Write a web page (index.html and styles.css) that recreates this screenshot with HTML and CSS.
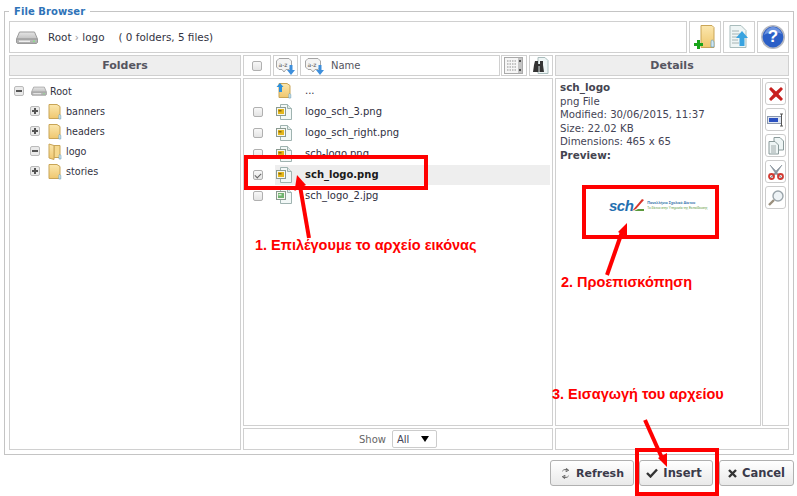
FILE: index.html
```html
<!DOCTYPE html>
<html lang="en">
<head>
<meta charset="utf-8">
<title>File Browser</title>
<link rel="stylesheet" href="styles.css">
</head>
<body>
<svg class="defs" width="0" height="0">
  <defs>
    <linearGradient id="fold" x1="0" y1="0" x2="0" y2="1"><stop offset="0" stop-color="#fbe7ae"/><stop offset="1" stop-color="#efc76e"/></linearGradient>
    <linearGradient id="drv" x1="0" y1="0" x2="0" y2="1"><stop offset="0" stop-color="#e6e6e6"/><stop offset="1" stop-color="#a9a9a9"/></linearGradient>
    <symbol id="i-folder" viewBox="0 0 14 17">
      <path d="M1 1.5h8l3 2v12H1z" fill="url(#fold)" stroke="#c9a557"/>
      <path d="M11.5 11.5c1 0 1.3 1 1.3 2v2.5h-2v-2.500c0-1 .2-2 .7-2z" fill="#cfe6f2" stroke="#6d9fb8" stroke-width=".6"/>
    </symbol>
    <symbol id="i-open" viewBox="0 0 14 17">
      <path d="M6 2.500h6v12H6z" fill="#f5d98f" stroke="#c9a557"/>
      <path d="M1 1l5 1.500v14L1 15z" fill="url(#fold)" stroke="#c9a557"/>
      <path d="M11.800 11.500c.8 0 1.200 1 1.200 2v2.500h-2v-2.500c0-1 .3-2 .8-2z" fill="#cfe6f2" stroke="#6d9fb8" stroke-width=".6"/>
    </symbol>
    <symbol id="i-drive" viewBox="0 0 22 14">
      <path d="M3.500 1.500h15l3 7v3.500l-1 1H1.500l-1-1V8.500z" fill="url(#drv)" stroke="#9b9b9b"/>
      <path d="M1 8.500h20" stroke="#8e8e8e"/>
      <path d="M3 10.800h11" stroke="#efefef" stroke-width="1.400"/>
      <circle cx="18" cy="10.800" r="1" fill="#8be08b"/>
    </symbol>
    <symbol id="i-file" viewBox="0 0 16 16">
      <path d="M4.500 .5h7l4 4v11h-11z" fill="#f2f8f7" stroke="#9fb3b0"/>
      <path d="M11.500 .5v4h4" fill="#dfe9e8" stroke="#9fb3b0"/>
      <rect x=".5" y="3.500" width="9" height="8" fill="#f7f7f0" stroke="#8a9a90"/>
      <rect x="2" y="5" width="6" height="5" fill="#e3b71c"/>
      <rect x="2.500" y="6" width="3" height="1.500" fill="#8a6a10"/>
    </symbol>
    <symbol id="i-jpg" viewBox="0 0 16 16">
      <path d="M4.500 .5h7l4 4v11h-11z" fill="#f2f8f7" stroke="#9fb3b0"/>
      <path d="M11.500 .5v4h4" fill="#dfe9e8" stroke="#9fb3b0"/>
      <rect x=".5" y="3.500" width="9" height="8" fill="#f7f7f0" stroke="#8a9a90"/>
      <rect x="2" y="5" width="6" height="5" fill="#6fb36f"/>
      <rect x="2.500" y="6" width="3" height="1.500" fill="#d8ecd8"/>
    </symbol>
    <symbol id="i-sort" viewBox="0 0 20 18">
      <path d="M3 1.500h10l2.500 2.500v6L13 12.500H10L8 15l-2-2.500H3L.5 10V4z" fill="#f4f4f4" stroke="#a5a5a5"/>
      <text x="2.500" y="9.500" class="sort-label">a-z</text>
      <path d="M13.500 8h3v5h2.500l-4 5-4-5h2.500z" fill="#3e8fdc"/>
    </symbol>
  </defs>
</svg>

<fieldset class="browser">
  <legend class="legend">File Browser</legend>

  <div class="toolbar">
    <div class="cell path">
      <svg class="ic-drive-lg"><use href="#i-drive"/></svg>
      <span class="crumbs">Root <span class="sep">›</span> logo</span>
      <span class="count">( 0 folders, 5 files)</span>
    </div>
    <div class="cell tool">
      <svg width="22" height="24" viewBox="0 0 22 24">
        <path d="M8 .5h11l2 2v20H8z" fill="url(#fold)" stroke="#c9a557" transform="translate(-1 0)"/>
        <path d="M18 15c1 0 2 1 2 3v4h-3v-4c0-2 .4-3 1-3z" fill="#cfe6f2" stroke="#6d9fb8" stroke-width=".7"/>
        <path d="M3 15h3v3h3v3H6v3H3v-3H0v-3h3z" fill="#1aa51a"/>
      </svg>
    </div>
    <div class="cell tool">
      <svg width="20" height="24" viewBox="0 0 20 24">
        <path d="M1 .5h11l5 5v17H1z" fill="#eef5f5" stroke="#a9bcbc"/>
        <path d="M3 6h7M3 9h8M3 12h6M3 15h6M3 18h7" stroke="#a6b4b4"/>
        <path d="M13 6l6 7h-3.500v8h-5v-8H7z" fill="#39a3e0"/>
      </svg>
    </div>
    <div class="cell tool">
      <svg width="24" height="24" viewBox="0 0 24 24">
        <circle cx="12" cy="12" r="11.200" fill="#2b5fc7" stroke="#b5b8c0" stroke-width="1.600"/>
        <path d="M3 10c2-6 6-8 9-8s7 2 9 7c-5-2-13-2-18 1z" fill="#6d94e0"/>
      </svg>
      <span class="help-mark">?</span>
    </div>
  </div>

  <div class="panes">
    <div class="pane-folders">
      <div class="head">Folders</div>
      <div class="box tree">
        <div class="tree-row root"><i class="exp minus"></i><svg class="ic-drive"><use href="#i-drive"/></svg><span>Root</span></div>
        <div class="tree-row"><i class="exp plus"></i><svg class="ic-folder"><use href="#i-folder"/></svg><span>banners</span></div>
        <div class="tree-row"><i class="exp plus"></i><svg class="ic-folder"><use href="#i-folder"/></svg><span>headers</span></div>
        <div class="tree-row"><i class="exp minus"></i><svg class="ic-folder"><use href="#i-open"/></svg><span>logo</span></div>
        <div class="tree-row"><i class="exp plus"></i><svg class="ic-folder"><use href="#i-folder"/></svg><span>stories</span></div>
      </div>
    </div>

    <div class="pane-files">
      <div class="files-head">
        <div class="fh fh-check"><i class="chk"></i></div>
        <div class="fh fh-sort"><svg class="ic-sort"><use href="#i-sort"/></svg></div>
        <div class="fh fh-name"><svg class="ic-sort"><use href="#i-sort"/></svg><span>Name</span></div>
        <div class="fh fh-view">
          <svg width="20" height="18" viewBox="0 0 20 18">
            <rect x=".5" y=".5" width="18" height="16" fill="#f6f6f6" stroke="#aaa"/>
            <path d="M3 4h9M3 7h9M3 10h9M3 13h9" stroke="#8f8f8f" stroke-dasharray="1.500 1"/>
            <rect x="14" y="1" width="4" height="15" fill="#c4c4c4"/>
            <rect x="15" y="3" width="2" height="2" fill="#555"/><rect x="15" y="12" width="2" height="2" fill="#555"/>
          </svg>
        </div>
        <div class="fh fh-find">
          <svg width="16" height="18" viewBox="0 0 16 18">
            <path d="M5 .5h7l3 3v13H5z" fill="#eef5f5" stroke="#a9bcbc"/>
            <path d="M2 4h3v3h2V4h3v4l1 7H6.500V9h-1v6H0l1-7z" fill="#333"/>
          </svg>
        </div>
      </div>
      <div class="box filelist">
        <div class="file up">
          <i class="chk blank"></i>
          <svg class="ic-up" width="16" height="17" viewBox="0 0 16 17">
            <use href="#i-folder" width="14" height="17" x="2"/>
            <path d="M4 1l3.500 4H6v5H3V5H.5z" fill="#2a8fdc"/>
          </svg>
          <span>...</span>
        </div>
        <div class="file"><i class="chk"></i><svg class="ic-file"><use href="#i-file"/></svg><span>logo_sch_3.png</span></div>
        <div class="file"><i class="chk"></i><svg class="ic-file"><use href="#i-file"/></svg><span>logo_sch_right.png</span></div>
        <div class="file"><i class="chk"></i><svg class="ic-file"><use href="#i-file"/></svg><span>sch-logo.png</span></div>
        <div class="file selected"><i class="chk on"></i><div class="sel-band"><svg class="ic-file"><use href="#i-file"/></svg><span>sch_logo.png</span></div></div>
        <div class="file"><i class="chk"></i><svg class="ic-file"><use href="#i-jpg"/></svg><span>sch_logo_2.jpg</span></div>
      </div>
      <div class="box show-bar">
        <span>Show</span>
        <span class="select">All<i class="caret"></i></span>
      </div>
    </div>

    <div class="pane-details">
      <div class="head">Details</div>
      <div class="details-body">
        <div class="box info">
          <div class="strong">sch_logo</div>
          <div>png File</div>
          <div>Modified: 30/06/2015, 11:37</div>
          <div>Size: 22.02 KB</div>
          <div>Dimensions: 465 x 65</div>
          <div class="strong">Preview:</div>
          <div class="preview">
            <span class="logo-sch">sch</span>
            <svg class="logo-mark" width="14" height="14" viewBox="0 0 14 14">
              <path d="M1 13 11 1l2 1L5 11z" fill="#d8352a"/>
              <path d="M3 13h10v-2H7z" fill="#5c9a3c"/>
            </svg>
            <span class="logo-copy">
              <span class="logo-l1">Πανελλήνιο Σχολικό Δίκτυο</span>
              <span class="logo-l2">Το δίκτυο στην Υπηρεσία της Εκπαίδευσης</span>
            </span>
          </div>
        </div>
        <div class="box actions">
          <div class="act">
            <svg width="16" height="16" viewBox="0 0 16 16"><path d="M1 3l2-2 5 4.500L13 1l2 2-4.500 5 4.500 5-2 2-5-4.500L3 15l-2-2 4.500-5z" fill="#c8201e"/></svg>
          </div>
          <div class="act">
            <svg width="18" height="14" viewBox="0 0 18 14"><rect x=".5" y="3.500" width="14" height="7" fill="#dfe6f2" stroke="#8a97ad"/><rect x="2" y="5" width="9" height="4" fill="#2a50c0"/><path d="M13 1h3M13 13h3M14.500 1v12" stroke="#555" fill="none"/></svg>
          </div>
          <div class="act">
            <svg width="16" height="18" viewBox="0 0 16 18"><path d="M6 .5h6l3.500 3.500v9H6z" fill="#eef5f5" stroke="#8a9a9a"/><path d="M1 4.500h6l3.500 3.500v9H1z" fill="#eef5f5" stroke="#8a9a9a"/><path d="M3 9h5M3 11h5M3 13h5M3 15h5" stroke="#a0aaaa"/></svg>
          </div>
          <div class="act">
            <svg width="16" height="16" viewBox="0 0 16 16"><path d="M2 1l6 6 6-6-5 7.500L15 15 8 10 1 15l6-6.500z" fill="#8d99a3" stroke="#77838c" stroke-width=".5"/><circle cx="3.500" cy="12.500" r="2.500" fill="none" stroke="#d23a32" stroke-width="1.800"/><circle cx="12.500" cy="12.500" r="2.500" fill="none" stroke="#d23a32" stroke-width="1.800"/></svg>
          </div>
          <div class="act">
            <svg width="16" height="16" viewBox="0 0 16 16"><circle cx="10" cy="6" r="5" fill="#eef3f6" stroke="#9aa4aa" stroke-width="1.400"/><path d="M6 10l-5 5" stroke="#9a8f7d" stroke-width="2.400"/></svg>
          </div>
        </div>
      </div>
      <div class="box details-foot"></div>
    </div>
  </div>
</fieldset>

<div class="buttons">
  <button class="btn btn-refresh">
    <svg width="11" height="11" viewBox="0 0 12 12"><path d="M2.500 3.500A4.500 4.500 0 0 1 9 2.500M9.500 8.500A4.500 4.500 0 0 1 3 9.500M7 .5l-.5 3.500 3-1.500zM5 11.500l.5-3.500-3 1.500z" fill="none" stroke="#555" stroke-width=".9"/></svg>
    Refresh
  </button>
  <button class="btn btn-insert">
    <svg width="12" height="10" viewBox="0 0 12 10"><path d="M1 5l3.500 3.500L11 1.500" fill="none" stroke="#333" stroke-width="2.400"/></svg>
    Insert
  </button>
  <button class="btn btn-cancel">
    <svg width="9" height="9" viewBox="0 0 9 9"><path d="M1 1l7 7M8 1L1 8" stroke="#333" stroke-width="2.400"/></svg>
    Cancel
  </button>
</div>

<div class="mark mark-1"></div>
<div class="mark mark-2"></div>
<div class="mark mark-3"></div>
<svg class="arrows" width="797" height="496" viewBox="0 0 797 496">
  <path d="M309 238 300 186" stroke="#f00" stroke-width="4" fill="none"/>
  <path d="M297 175 294.500 191 306 185z" fill="#f00"/>
  <path d="M607 275 622 232" stroke="#f00" stroke-width="4" fill="none"/>
  <path d="M627 223 618 232 627 237z" fill="#f00"/>
  <path d="M645 420 662 458" stroke="#f00" stroke-width="4" fill="none"/>
  <path d="M667 467 658 458 667 453z" fill="#f00"/>
</svg>
<div class="note note-1">1. Επιλέγουμε το αρχείο εικόνας</div>
<div class="note note-2">2. Προεπισκόπηση</div>
<div class="note note-3">3. Εισαγωγή του αρχείου</div>
</body>
</html>
```

FILE: styles.css
```css
* { box-sizing: border-box; }
html, body { margin: 0; padding: 0; }
body {
  position: relative;
  width: 797px;
  height: 496px;
  overflow: hidden;
  background: #fff;
  font-family: "DejaVu Sans", Verdana, sans-serif;
  font-size: 10.4px;
  color: #33333f;
}
.defs { position: absolute; }
.browser {
  margin: 4px 0 0 4px;
  width: 790px;
  height: 451px;
  padding: 3px 4px 4px 4px;
  border: 1px solid #c4c4c4;
  display: flex;
  flex-direction: column;
  gap: 2px;
}
.legend {
  margin-left: 0;
  padding: 2px 5px 0;
  font-weight: bold;
  font-size: 10px;
  letter-spacing: .08px;
  line-height: 12px;
  color: #2f73b8;
}
.toolbar { display: flex; gap: 2px; height: 32px; flex: none; }
.cell {
  border: 1px solid #d0d0d0;
  display: flex;
  align-items: center;
  position: relative;
}
.path { flex: 1; padding-left: 6px; }
.tool { width: 32px; justify-content: center; }
.ic-drive-lg { width: 22px; height: 15px; margin-right: 10px; }
.crumbs { margin-right: 14px; }
.sep { color: #999; }
.help-mark {
  position: absolute;
  inset: 0;
  display: flex;
  align-items: center;
  justify-content: center;
  color: #fff;
  font: bold 17px "Liberation Sans", sans-serif;
}
.panes { display: flex; gap: 2px; flex: 1; min-height: 0; }
.pane-folders { width: 232px; display: flex; flex-direction: column; gap: 2px; }
.pane-files { width: 310px; display: flex; flex-direction: column; gap: 2px; }
.pane-details { width: 234px; display: flex; flex-direction: column; gap: 2px; }
.head {
  height: 21px;
  flex: none;
  background: #eee;
  border: 1px solid #d0d0d0;
  text-align: center;
  font-weight: bold;
  font-size: 11px;
  line-height: 19px;
  color: #555560;
}
.box { border: 1px solid #d0d0d0; }
.tree { flex: 1; padding: 2px 0 0 4px; font-size: 9.6px; }
.tree-row { height: 20px; display: flex; align-items: center; padding-left: 16px; }
.tree-row.root { padding-left: 0; }
.exp {
  width: 10px;
  height: 10px;
  margin-right: 7px;
  border: 1px solid #bbb;
  border-radius: 2px;
  background: #eaeaea;
  position: relative;
  flex: none;
}
.exp::before {
  content: "";
  position: absolute;
  left: 1px;
  top: 3px;
  width: 6px;
  height: 2px;
  background: #555;
}
.plus::after {
  content: "";
  position: absolute;
  left: 3px;
  top: 1px;
  width: 2px;
  height: 6px;
  background: #555;
}
.ic-drive { width: 16px; height: 10px; margin-right: 3px; }
.ic-folder { width: 14px; height: 17px; margin-right: 4px; margin-left: 1px; }

.files-head { display: flex; gap: 2px; height: 21px; flex: none; }
.fh { border: 1px solid #d0d0d0; display: flex; align-items: center; justify-content: center; }
.fh-check { width: 28px; }
.fh-sort { width: 25px; }
.fh-name { flex: 1; justify-content: flex-start; margin-right: -1px; }
.fh-name .ic-sort { margin-left: 4px; }
.fh-name span { margin-left: 6px; color: #555560; font-size: 10px; }
.fh-view { width: 26px; }
.fh-find { width: 24px; }
.ic-sort { width: 20px; height: 18px; }
.sort-label { font: 6px "DejaVu Sans", sans-serif; fill: #555; }
.chk {
  display: block;
  width: 10px;
  height: 10px;
  flex: none;
  border: 1px solid #b0b0b0;
  border-radius: 2px;
  background: linear-gradient(#f8f8f8, #e4e4e4);
  position: relative;
}
.chk.blank { visibility: hidden; }
.chk.on::after {
  content: "";
  position: absolute;
  left: 1px;
  top: 0;
  width: 5px;
  height: 3px;
  border-left: 1px solid #666;
  border-bottom: 1px solid #666;
  transform: rotate(-45deg);
  transform-origin: 50% 50%;
  margin-top: 2px;
}
.filelist { flex: 1; padding: 1px 0 0 9px; min-height: 0; font-size: 10px; }
.file { height: 21px; display: flex; align-items: center; }
.file .chk { margin-right: 13px; }
.ic-file { width: 16px; height: 16px; margin-right: 13px; flex: none; }
.ic-up { width: 16px; height: 17px; margin-right: 13px; flex: none; }
.file span { color: #2e2e3e; }
.sel-band {
  display: flex;
  align-items: center;
  width: 275px;
  height: 20px;
  background: #eee;
  padding-left: 1px;
}
.file.selected .chk { margin-right: 12px; }
.file.selected span { font-weight: bold; color: #1a1a1a; }
.show-bar {
  height: 22px;
  flex: none;
  display: flex;
  align-items: center;
  justify-content: center;
  gap: 6px;
  color: #666;
  font-size: 10px;
}
.select {
  width: 45px;
  height: 18px;
  border: 1px solid #ccc;
  border-radius: 2px;
  color: #445;
  padding-left: 4px;
  line-height: 17px;
  position: relative;
}
.caret {
  position: absolute;
  right: 7px;
  top: 5px;
  border-left: 4px solid transparent;
  border-right: 4px solid transparent;
  border-top: 6px solid #000;
}
.details-body { flex: 1; display: flex; gap: 1px; min-height: 0; }
.info { width: 206px; padding: 2px 0 0 4px; font-size: 10.2px; line-height: 13.5px; color: #445; }
.strong { font-weight: bold; color: #444450; font-size: 10.400px; }
.preview {
  display: flex;
  align-items: center;
  margin: 35px 0 0 49px;
  height: 16px;
}
.logo-sch {
  font: italic bold 15px "Liberation Sans", sans-serif;
  color: #1f6fb0;
  letter-spacing: -.5px;
}
.logo-mark { margin: 0 2px 0 -2px; }
.logo-copy { display: flex; flex-direction: column; line-height: 5px; white-space: nowrap; }
.logo-l1 { font: bold 3.700px/5px "Liberation Sans", sans-serif; color: #2a6fa8; }
.logo-l2 { font: 3.200px/4px "Liberation Sans", sans-serif; color: #5c9a3c; }
.actions { flex: 1; padding: 3px 2px; display: flex; flex-direction: column; gap: 3px; }
.act {
  height: 23px;
  border: 1px solid #ccc;
  border-radius: 3px;
  display: flex;
  align-items: center;
  justify-content: center;
}
.details-foot { height: 22px; flex: none; }
.buttons {
  display: flex;
  margin: 5px 0 0 550px;
  width: 245px;
}
.btn {
  height: 26px;
  border: 1px solid #b0b0b0;
  border-radius: 3px;
  background: linear-gradient(#fff, #e9e9e9);
  font: bold 11.500px "DejaVu Sans", Verdana, sans-serif;
  color: #3a3a4a;
  padding: 0;
  display: flex;
  align-items: center;
  justify-content: center;
  gap: 5px;
}
.btn-refresh { width: 84px; margin-right: 5px; font-size: 11px; }
.btn-insert { width: 74px; margin-right: 6px; padding-right: 4px; }
.btn-cancel { width: 75px; }
.mark { position: absolute; border: 4px solid #f00; }
.mark-1 { left: 244px; top: 155px; width: 184px; height: 35px; }
.mark-2 { left: 582px; top: 185px; width: 137px; height: 54px; }
.mark-3 { left: 635px; top: 448px; width: 84px; height: 48px; }
.arrows { position: absolute; left: 0; top: 0; pointer-events: none; }
.note {
  position: absolute;
  font: bold 14.500px "Liberation Sans", sans-serif;
  color: #f00;
  white-space: nowrap;
}
.note-1 { left: 255px; top: 237px; }
.note-2 { left: 561px; top: 274px; }
.note-3 { left: 552px; top: 386px; }
```
